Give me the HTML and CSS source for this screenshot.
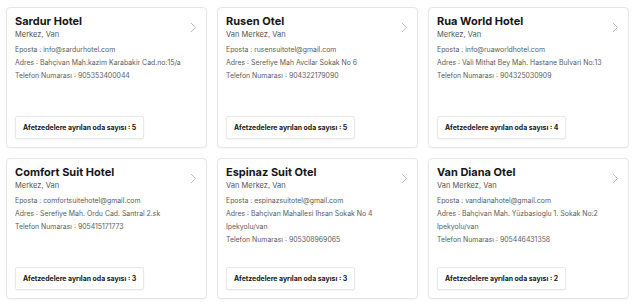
FILE: index.html
```html
<!DOCTYPE html>
<html lang="tr">
<head>
    <meta charset="UTF-8">
    <meta name="viewport" content="width=device-width, initial-scale=1.0">
    <title>Oteller</title>
    <link rel="stylesheet" href="styles.css">
</head>
<body>
    <div class="hotel-grid">
        <div class="hotel-card">
            <div class="hotel-head">
                <div>
                    <h3 class="hotel-name">Sardur Hotel</h3>
                    <div class="hotel-location">Merkez, Van</div>
                </div>
                <svg class="chevron" viewBox="0 0 7 11"><path d="M1 1l4.5 4.5L1 10"/></svg>
            </div>
            <p class="hotel-info">Eposta : info@sardurhotel.com</p>
            <p class="hotel-info">Adres : Bahçivan Mah.kazim Karabakir Cad.no:15/a</p>
            <p class="hotel-info">Telefon Numarası : 905353400044</p>
            <div class="room-count">Afetzedelere ayrılan oda sayısı : 5</div>
        </div>

        <div class="hotel-card">
            <div class="hotel-head">
                <div>
                    <h3 class="hotel-name">Rusen Otel</h3>
                    <div class="hotel-location">Van Merkez, Van</div>
                </div>
                <svg class="chevron" viewBox="0 0 7 11"><path d="M1 1l4.5 4.5L1 10"/></svg>
            </div>
            <p class="hotel-info">Eposta : rusensuitotel@gmail.com</p>
            <p class="hotel-info">Adres : Serefiye Mah Avcilar Sokak No 6</p>
            <p class="hotel-info">Telefon Numarası : 904322179090</p>
            <div class="room-count">Afetzedelere ayrılan oda sayısı : 5</div>
        </div>

        <div class="hotel-card">
            <div class="hotel-head">
                <div>
                    <h3 class="hotel-name">Rua World Hotel</h3>
                    <div class="hotel-location">Merkez, Van</div>
                </div>
                <svg class="chevron" viewBox="0 0 7 11"><path d="M1 1l4.5 4.5L1 10"/></svg>
            </div>
            <p class="hotel-info">Eposta : info@ruaworldhotel.com</p>
            <p class="hotel-info">Adres : Vali Mithat Bey Mah. Hastane Bulvari No:13</p>
            <p class="hotel-info">Telefon Numarası : 904325030909</p>
            <div class="room-count">Afetzedelere ayrılan oda sayısı : 4</div>
        </div>

        <div class="hotel-card">
            <div class="hotel-head">
                <div>
                    <h3 class="hotel-name">Comfort Suit Hotel</h3>
                    <div class="hotel-location">Merkez, Van</div>
                </div>
                <svg class="chevron" viewBox="0 0 7 11"><path d="M1 1l4.5 4.5L1 10"/></svg>
            </div>
            <p class="hotel-info">Eposta : comfortsuitehotel@gmail.com</p>
            <p class="hotel-info">Adres : Serefiye Mah. Ordu Cad. Santral 2.sk</p>
            <p class="hotel-info">Telefon Numarası : 905415171773</p>
            <div class="room-count">Afetzedelere ayrılan oda sayısı : 3</div>
        </div>

        <div class="hotel-card">
            <div class="hotel-head">
                <div>
                    <h3 class="hotel-name">Espinaz Suit Otel</h3>
                    <div class="hotel-location">Van Merkez, Van</div>
                </div>
                <svg class="chevron" viewBox="0 0 7 11"><path d="M1 1l4.5 4.5L1 10"/></svg>
            </div>
            <p class="hotel-info">Eposta : espinazsuitotel@gmail.com</p>
            <p class="hotel-info">Adres : Bahçivan Mahallesi Ihsan Sokak No 4<br>Ipekyolu/van</p>
            <p class="hotel-info">Telefon Numarası : 905308969065</p>
            <div class="room-count">Afetzedelere ayrılan oda sayısı : 3</div>
        </div>

        <div class="hotel-card">
            <div class="hotel-head">
                <div>
                    <h3 class="hotel-name">Van Diana Otel</h3>
                    <div class="hotel-location">Van Merkez, Van</div>
                </div>
                <svg class="chevron" viewBox="0 0 7 11"><path d="M1 1l4.5 4.5L1 10"/></svg>
            </div>
            <p class="hotel-info">Eposta : vandianahotel@gmail.com</p>
            <p class="hotel-info">Adres : Bahçivan Mah. Yüzbasioglu 1. Sokak No:2<br>Ipekyolu/van</p>
            <p class="hotel-info">Telefon Numarası : 905446431358</p>
            <div class="room-count">Afetzedelere ayrılan oda sayısı : 2</div>
        </div>
    </div>
</body>
</html>
```

FILE: styles.css
```css
* {
    margin: 0;
    padding: 0;
    box-sizing: border-box;
    font-family: Inter, 'Noto Sans', 'Liberation Sans', sans-serif;
}

body {
    background-color: white;
    padding: 7px 6px;
}

.hotel-grid {
    display: grid;
    grid-template-columns: repeat(3, 1fr);
    grid-auto-rows: 141px;
    gap: 10px;
}

.hotel-card {
    display: flex;
    flex-direction: column;
    border: 1px solid #e6e6e6;
    border-radius: 4px;
    box-shadow: 0 1px 2px rgba(0, 0, 0, 0.04);
    padding: 6px 8px 8px 8px;
    background-color: white;
}

.hotel-head {
    display: flex;
    justify-content: space-between;
    align-items: center;
    margin-bottom: 3px;
}

.hotel-name {
    font-size: 11px;
    font-weight: 700;
    line-height: 15px;
    color: #161616;
}

.hotel-location {
    font-size: 7.5px;
    line-height: 11px;
    color: #555;
}

.chevron {
    width: 7px;
    height: 11px;
    margin-right: 1px;
    fill: none;
    stroke: #bbb;
    stroke-width: 1;
}

.hotel-info {
    font-size: 6.9px;
    line-height: 13px;
    color: #5c5c5c;
}

.room-count {
    margin-top: auto;
    align-self: flex-start;
    border: 1px solid #e8e8e8;
    border-radius: 2px;
    box-shadow: 0 1px 2px rgba(0, 0, 0, 0.05);
    padding: 0 7px;
    height: 23px;
    line-height: 21px;
    font-size: 6.9px;
    font-weight: 700;
    color: #161616;
}
```
